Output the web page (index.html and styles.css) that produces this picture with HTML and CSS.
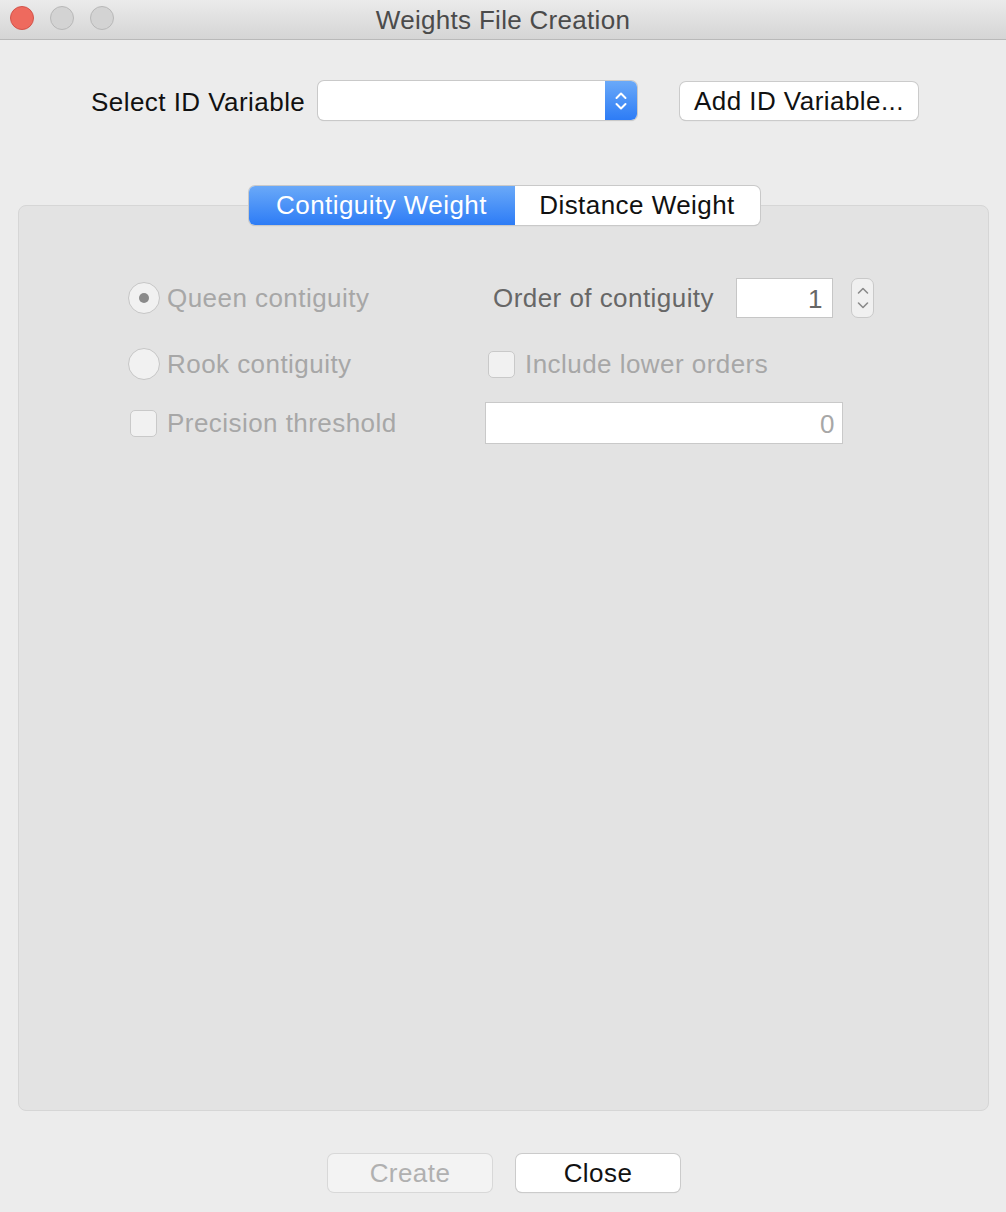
FILE: index.html
```html
<!DOCTYPE html>
<html>
<head>
<meta charset="utf-8">
<link rel="stylesheet" href="styles.css">
</head>
<body>
<div class="window">
  <div class="titlebar">
    <div class="lights">
      <span class="light red"></span>
      <span class="light gray"></span>
      <span class="light gray"></span>
    </div>
    <div class="title">Weights File Creation</div>
  </div>

  <div class="id-row">
    <span class="id-label">Select ID Variable</span>
    <div class="select">
      <div class="select-field"></div>
      <div class="select-arrows">
        <svg width="14" height="22" viewBox="0 0 14 22"><path d="M2.5 8 L7 3.5 L11.5 8 M2.5 14 L7 18.5 L11.5 14" fill="none" stroke="#fff" stroke-width="2" stroke-linecap="round" stroke-linejoin="round"/></svg>
      </div>
    </div>
    <button class="btn add-btn">Add ID Variable...</button>
  </div>

  <div class="tabs-area">
    <div class="tabs">
      <div class="tab active">Contiguity Weight</div>
      <div class="tab">Distance Weight</div>
    </div>
    <div class="panel">
      <div class="row row1">
        <div class="left">
          <span class="radio checked"><span class="dot"></span></span>
          <span class="dim">Queen contiguity</span>
        </div>
        <div class="right">
          <span class="order-label">Order of contiguity</span>
          <div class="num-field">1</div>
          <div class="spinner">
            <svg width="14" height="32" viewBox="0 0 14 32"><path d="M2.5 11 L7 6.5 L11.5 11 M2.5 21 L7 25.5 L11.5 21" fill="none" stroke="#8a8a8a" stroke-width="1.6" stroke-linecap="round" stroke-linejoin="round"/></svg>
          </div>
        </div>
      </div>
      <div class="row row2">
        <div class="left">
          <span class="radio"></span>
          <span class="dim">Rook contiguity</span>
        </div>
        <div class="right right2">
          <span class="check"></span>
          <span class="dim">Include lower orders</span>
        </div>
      </div>
      <div class="row row3">
        <div class="left left3">
          <span class="check"></span>
          <span class="dim">Precision threshold</span>
        </div>
        <div class="right right3">
          <div class="thresh-field">0</div>
        </div>
      </div>
    </div>
  </div>

  <div class="bottom">
    <button class="btn disabled">Create</button>
    <button class="btn">Close</button>
  </div>
</div>
</body>
</html>
```

FILE: styles.css
```css
* { box-sizing: border-box; }
html, body {
  margin: 0;
  padding: 0;
  background: #ececec;
}
body {
  font-family: "Liberation Sans", Arial, sans-serif;
  font-size: 26px;
  letter-spacing: 0.45px;
  color: #111;
}
.window {
  width: 1006px;
  height: 1212px;
  background: #ececec;
  display: flex;
  flex-direction: column;
}
.titlebar {
  height: 40px;
  background: linear-gradient(#ebebeb, #d5d5d5);
  border-bottom: 1px solid #b9b9b9;
  display: flex;
  align-items: center;
  position: relative;
}
.lights {
  display: flex;
  gap: 16px;
  padding-left: 10px;
  margin-top: -3px;
}
.light {
  width: 24px;
  height: 24px;
  border-radius: 50%;
  display: block;
}
.light.red { background: #ee6a5e; border: 1px solid #d2544b; }
.light.gray { background: #d3d3d3; border: 1px solid #b8b8b8; }
.title {
  position: absolute;
  left: 0;
  right: 0;
  top: 5px;
  text-align: center;
  color: #4b4b4b;
  font-size: 26px;
  letter-spacing: 0.3px;
  pointer-events: none;
}

.id-row {
  display: flex;
  align-items: center;
  padding-left: 91px;
  margin-top: 41px;
  height: 39px;
}
.id-label {
  width: 227px;
  color: #111;
  margin-top: 4px;
}
.select {
  width: 319px;
  height: 39px;
  display: flex;
  border-radius: 6px;
  background: #fff;
  box-shadow: 0 0 0 1px #c9c9c9, 0 1px 1px rgba(0,0,0,0.18);
  overflow: hidden;
}
.select-field { flex: 1; }
.select-arrows {
  width: 32px;
  background: linear-gradient(#6aa9f8, #2d7cf6);
  display: flex;
  align-items: center;
  justify-content: center;
}
.btn {
  font-family: "Liberation Sans", Arial, sans-serif;
  font-size: 26px;
  letter-spacing: 0.45px;
  color: #111;
  background: #fff;
  border: none;
  border-radius: 6px;
  box-shadow: 0 0 0 1px #cbcbcb, 0 1px 1px rgba(0,0,0,0.2);
  height: 38px;
  padding: 0;
  line-height: 38px;
}
.add-btn {
  width: 238px;
  margin-left: 43px;
}

.tabs-area {
  margin: 66px 17px 0 18px;
  display: flex;
  flex-direction: column;
  align-items: center;
}
.tabs {
  display: flex;
  height: 39px;
  border-radius: 6px;
  background: #fff;
  box-shadow: 0 0 0 1px #c9c9c9, 0 1px 1px rgba(0,0,0,0.2);
  overflow: hidden;
  margin-bottom: -20px;
  position: relative;
  z-index: 1;
  margin-left: 1px;
}
.tab {
  height: 39px;
  line-height: 39px;
  text-align: center;
  color: #111;
}
.tab:first-child { width: 266px; }
.tab:last-child { width: 245px; }
.tab.active {
  background: linear-gradient(#6aa9f8, #2d7cf6);
  color: #fff;
}
.panel {
  width: 100%;
  height: 906px;
  background: #e3e3e3;
  border: 1px solid #d6d6d6;
  border-radius: 8px;
  padding: 72px 0 0 109px;
}
.row {
  display: flex;
  align-items: center;
}
.row1 { height: 40px; }
.row2 { height: 40px; margin-top: 26px; }
.row3 { height: 42px; margin-top: 18px; }
.left {
  width: 357px;
  display: flex;
  align-items: center;
}
.right {
  display: flex;
  align-items: center;
}
.dim { color: #a7a7a7; }
.radio {
  width: 32px;
  height: 32px;
  border-radius: 50%;
  background: #f1f1f1;
  border: 1px solid #c6c6c6;
  display: flex;
  align-items: center;
  justify-content: center;
  margin-right: 7px;
}
.radio .dot {
  width: 10px;
  height: 10px;
  border-radius: 50%;
  background: #8a8a8a;
}
.check {
  width: 27px;
  height: 27px;
  border-radius: 5px;
  background: #f1f1f1;
  border: 1px solid #c9c9c9;
  margin-right: 10px;
}
.left3 { padding-left: 2px; }
.right2 { padding-left: 3px; }
.order-label {
  color: #676767;
  margin-left: 8px;
  width: 243px;
}
.num-field {
  width: 97px;
  height: 40px;
  background: #fff;
  border: 1px solid #c6c6c6;
  text-align: right;
  padding-right: 9px;
  line-height: 40px;
  color: #666;
}
.spinner {
  width: 23px;
  height: 40px;
  margin-left: 18px;
  border-radius: 7px;
  background: #f0f0f0;
  border: 1px solid #c9c9c9;
  display: flex;
  align-items: center;
  justify-content: center;
}
.thresh-field {
  width: 358px;
  height: 42px;
  background: #fff;
  border: 1px solid #c9c9c9;
  text-align: right;
  padding-right: 7px;
  line-height: 42px;
  color: #a7a7a7;
}

.bottom {
  display: flex;
  justify-content: center;
  gap: 24px;
  margin-top: 43px;
  padding-left: 2px;
}
.bottom .btn { width: 164px; }
.btn.disabled {
  background: #f3f3f3;
  color: #b0b0b0;
  box-shadow: 0 0 0 1px #d8d8d8;
}
```
